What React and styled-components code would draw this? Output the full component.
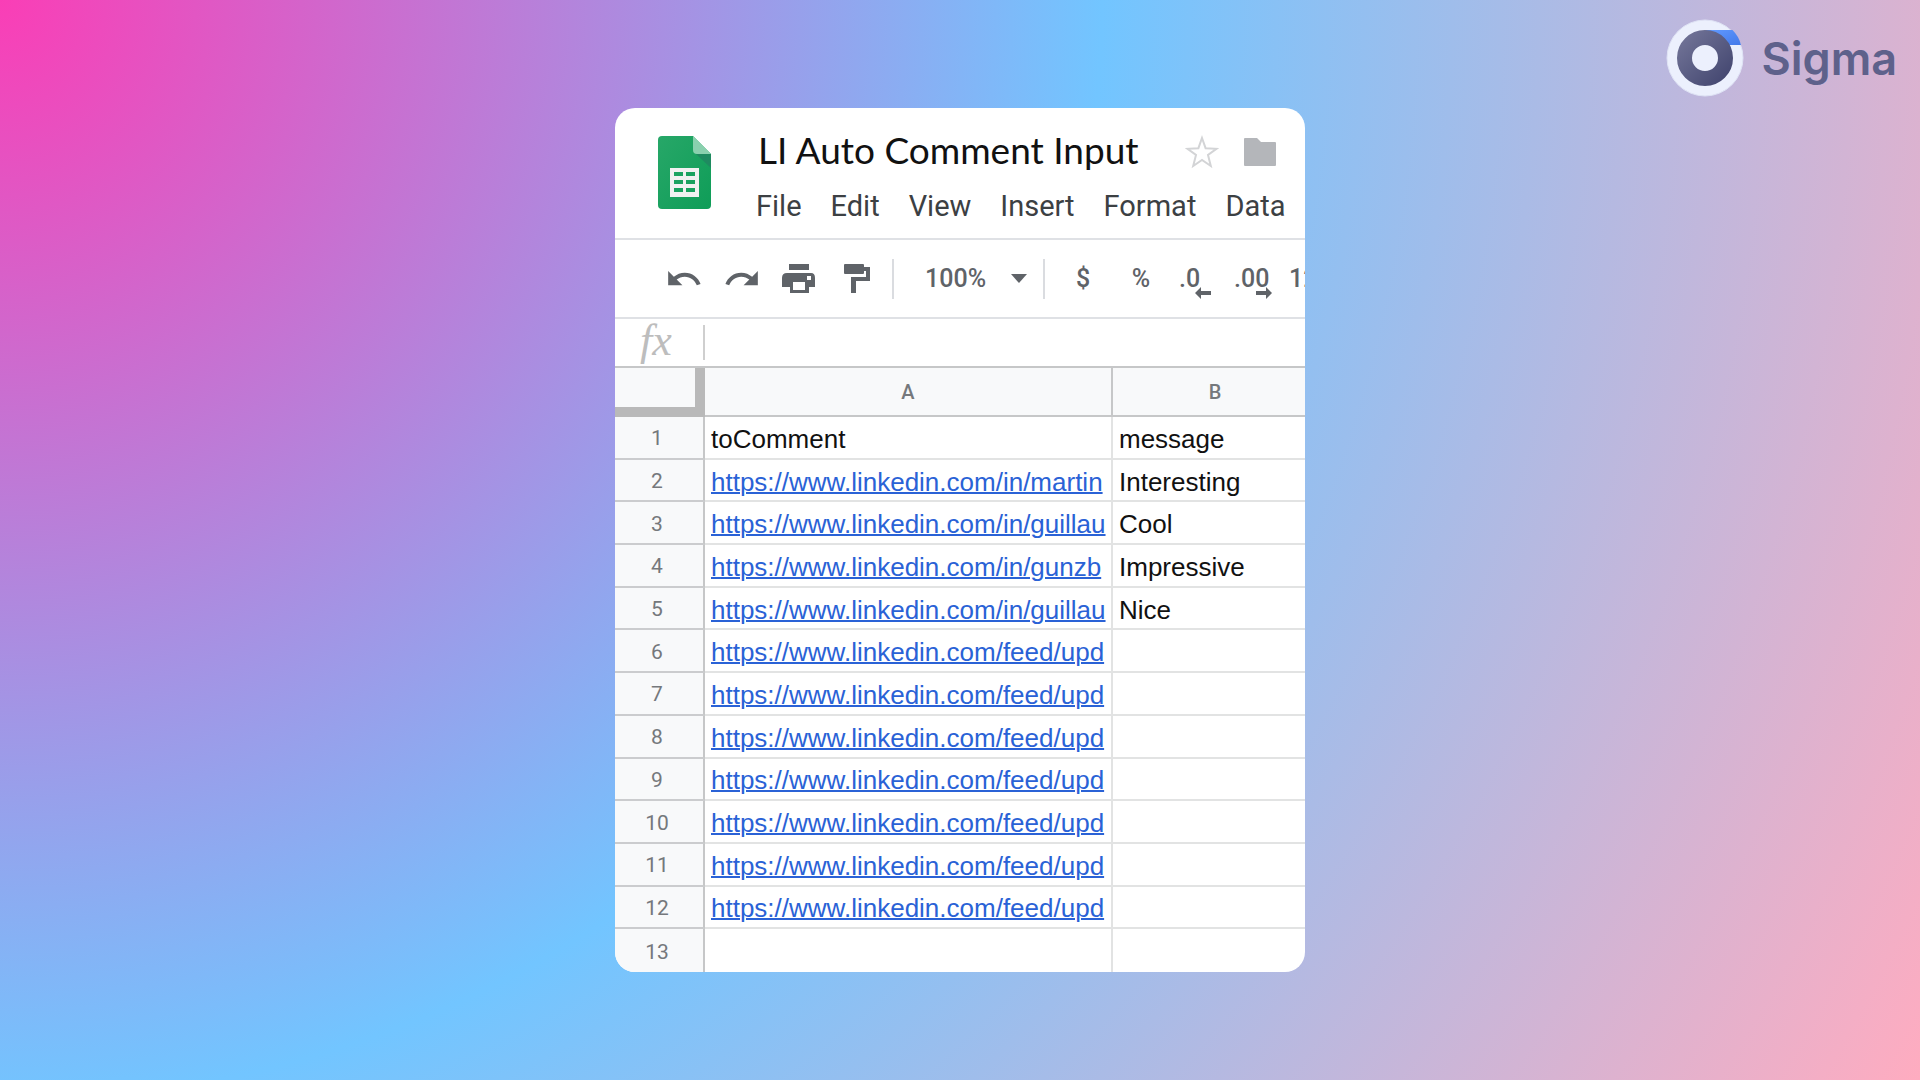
import React from 'react';
import styled, { createGlobalStyle } from 'styled-components';

const GlobalStyle = createGlobalStyle`
  *, *:before, *:after {
    box-sizing: border-box;
  }
  body {
    margin: 0;
  }
  button, input, select {
    font: inherit;
    color: inherit;
    background: none;
    border: 0;
    padding: 0;
    margin: 0;
  }
`;

const Page = styled.div`
  min-height: 100vh;
  display: grid;
  grid-template-columns: 1fr minmax(0, 690px) 1fr;
  align-items: center;
  font-family: Roboto, 'Liberation Sans', sans-serif;
  background: radial-gradient(circle farthest-corner at 0 0, #fa3eb6 0%, #72c5ff 50%, #ffacc0 100%);
`;
const Card = styled.main`
  grid-column: 2;
  min-height: 80vh;
  display: flex;
  flex-direction: column;
  overflow: hidden;
  border-radius: 20px;
  background-color: white;
`;

const Brand = styled.a`
  grid-column: 3;
  align-self: start;
  justify-self: end;
  display: flex;
  align-items: center;
  gap: 16px;
  padding: 18px 23px;
  color: #5e618b;
  font-family: Inter, 'Liberation Sans', sans-serif;
  font-size: 45px;
  font-weight: 600;
  line-height: 1;
  text-decoration: none;

  svg {
    width: 80px;
    height: 80px;
  }
`;

const TopBar = styled.header`
  display: flex;
  align-items: flex-start;
  gap: 44px;
  height: 132px;
  padding: 26px 0 0 43px;
  border-bottom: 2px solid #dfe1e5;
`;
const FileIcon = styled.svg`
  flex: none;
  width: 54px;
  height: 76px;
`;
const TitleRow = styled.div`
  display: flex;
  align-items: center;
  height: 36px;
`;
const Title = styled.h1`
  margin: 0 46px 0 2px;
  padding-bottom: 4px;
  color: #111;
  font-family: Lato, Roboto, sans-serif;
  font-size: 37px;
  font-weight: 400;
  line-height: 36px;
  white-space: nowrap;
`;
const TitleButton = styled.button`
  display: flex;
  margin-right: 24px;

  svg {
    width: 34px;
    height: 34px;
  }
`;
const Menu = styled.nav`
  display: flex;
  gap: 29px;
  margin-top: 18px;
`;
const MenuItem = styled.button`
  color: #3c4043;
  font-size: 29px;
  line-height: 36px;
`;

const Toolbar = styled.div`
  display: flex;
  flex: none;
  align-items: center;
  height: 79px;
  padding-left: 40px;
  border-bottom: 2px solid #dfe1e5;
  color: #5f6368;
  font-size: 25px;
  font-weight: 500;
  line-height: 28px;
  white-space: nowrap;
`;
const ToolButton = styled.button`
  display: flex;
  flex: none;
  justify-content: center;
  width: ${props => props.$width || 58}px;

  svg {
    width: 38px;
    height: 38px;
  }
`;
const Divider = styled.span`
  flex: none;
  width: 2px;
  height: 40px;
  background-color: #dadce0;
`;
const ZoomBox = styled.label`
  display: flex;
  flex: none;
  align-items: center;
  position: relative;
  width: 149px;
  padding-left: 31px;

  select {
    width: 100%;
    appearance: none;
    outline: none;
  }
  svg {
    position: absolute;
    right: 16px;
    width: 16px;
    height: 9px;
    pointer-events: none;
  }
`;
const FormatButton = styled.button`
  flex: none;
  position: relative;
  width: 55px;
  padding-left: 18px;
  text-align: left;

  svg {
    position: absolute;
    left: ${props => props.$arrow}px;
    top: 22px;
    width: 16px;
    height: 12px;
  }
`;
const IconGroup = styled.div`
  display: flex;
  flex: none;
  padding-right: 5px;
`;

const FormulaBar = styled.label`
  display: flex;
  flex: none;
  align-items: center;
  height: 47px;
`;
const Fx = styled.span`
  width: 88px;
  padding: 0 0 4px 25px;
  color: #bdbdbd;
  font-family: 'Liberation Serif', serif;
  font-size: 44px;
  font-style: italic;
  line-height: 40px;
`;
const FormulaInput = styled.input`
  flex: 1;
  height: 35px;
  padding: 0 8px;
  border-left: 2px solid #cfcfcf;
  outline: none;
  font-size: 26px;
`;

/* column B runs a little past the card's right edge */
const Table = styled.table`
  flex: 1;
  width: calc(100% + 14px);
  table-layout: fixed;
  border-collapse: separate;
  border-spacing: 0;
  border-top: 2px solid #c6c7c8;

  tbody tr {
    height: 42px;
  }
  tbody tr:last-child > * {
    border-bottom: 0;
  }
`;
const Corner = styled.td`
  width: 90px;
  height: 49px;
  padding: 0;
  background-color: #f8f9fa;
  border-right: 10px solid #b9b9b9;
  border-bottom: 10px solid #b9b9b9;
`;
const ColumnHead = styled.th`
  width: ${props => props.$width || 'auto'};
  height: 49px;
  padding: 0;
  background-color: #f8f9fa;
  border-right: 2px solid #c6c7c8;
  border-bottom: 2px solid #c6c7c8;
  color: #75787c;
  font-size: 20px;
  font-weight: 500;
`;
const RowHead = styled.th`
  padding: 2px 4px 0 0;
  background-color: #f8f9fa;
  border-right: 2px solid #c6c7c8;
  border-bottom: 2px solid #cbccce;
  color: #75787c;
  font-size: 21px;
  font-weight: 400;
  line-height: 24px;
`;
const Cell = styled.td`
  padding: 3px 0 0 6px;
  border-right: 2px solid #e2e3e3;
  border-bottom: 2px solid #e2e3e3;
  color: #111;
  font-family: 'Liberation Sans', Arial, sans-serif;
  font-size: 26px;
  line-height: 30px;
  white-space: nowrap;
  overflow: hidden;

  a {
    display: block;
    color: #2a62d6;
    text-decoration: underline;
    text-decoration-thickness: 2px;
  }
`;

const ROWS = [
  { text: 'toComment', message: 'message' },
  { link: 'https://www.linkedin.com/in/martin', message: 'Interesting' },
  { link: 'https://www.linkedin.com/in/guillau', message: 'Cool' },
  { link: 'https://www.linkedin.com/in/gunzb', message: 'Impressive' },
  { link: 'https://www.linkedin.com/in/guillau', message: 'Nice' },
  { link: 'https://www.linkedin.com/feed/upd' },
  { link: 'https://www.linkedin.com/feed/upd' },
  { link: 'https://www.linkedin.com/feed/upd' },
  { link: 'https://www.linkedin.com/feed/upd' },
  { link: 'https://www.linkedin.com/feed/upd' },
  { link: 'https://www.linkedin.com/feed/upd' },
  { link: 'https://www.linkedin.com/feed/upd' },
  {},
];

const MENU = ['File', 'Edit', 'View', 'Insert', 'Format', 'Data'];

const SigmaLogo = () => (
  <svg viewBox="0 0 80 80" aria-hidden="true">
    <defs>
      <linearGradient id="sigma-ring" x1="0" y1="0" x2="1" y2="1">
        <stop offset="0" stopColor="#6f7195" />
        <stop offset="1" stopColor="#464972" />
      </linearGradient>
      <linearGradient id="sigma-blue" x1="0" y1="0" x2="1" y2="1">
        <stop offset="0" stopColor="#629bff" />
        <stop offset="1" stopColor="#4379ea" />
      </linearGradient>
    </defs>
    <circle cx="40" cy="40" r="38" fill="#ecf0fd" stroke="#dfe3f5" strokeWidth="1" />
    <path d="M40 12H67.5Q74 18.5 76 27H60Z" fill="url(#sigma-blue)" />
    <circle cx="40" cy="40" r="20.5" fill="none" stroke="url(#sigma-ring)" strokeWidth="15" />
  </svg>
);

const SheetsIcon = () => (
  <FileIcon viewBox="0 0 54 76" aria-hidden="true">
    <defs>
      <linearGradient id="sheet-body" x1="0" y1="0" x2="1" y2="1">
        <stop offset="0" stopColor="#27a768" />
        <stop offset="1" stopColor="#0f9d58" />
      </linearGradient>
    </defs>
    <path d="M4 2H35L53 20V71Q53 75 49 75H4Q0 75 0 71V6Q0 2 4 2Z" fill="url(#sheet-body)" />
    <path d="M38 20L53 34V20Z" fill="#1f8a60" />
    <path d="M35 2L53 20H39Q35 20 35 16Z" fill="#8ad0ae" />
    <path
      d="M12 34H41V63H12ZM16 38V42H25V38ZM28 38V42H37V38ZM16 46V50H25V46ZM28 46V50H37V46ZM16 54V58H25V54ZM28 54V58H37V54Z"
      fill="#f1f1f1"
      fillRule="evenodd"
    />
  </FileIcon>
);

const Arrow = ({ left }) => (
  <svg viewBox="0 0 16 12" fill="currentColor" aria-hidden="true">
    {left ? <path d="M6 0V4H16V8H6V12L0 6Z" /> : <path d="M10 0V4H0V8H10V12L16 6Z" />}
  </svg>
);

const App = () => (
  <>
    <GlobalStyle />
    <Page>
      <Card>
        <TopBar>
          <SheetsIcon />
          <div>
            <TitleRow>
              <Title>LI Auto Comment Input</Title>
              <TitleButton aria-label="Star">
                <svg viewBox="0 0 34 34" fill="none" stroke="#d3d4d6" strokeWidth="2">
                  <path d="M17 3L20.6 13.2L31.5 13.8L23 20L25.8 31L17 25L8.2 31L11 20L2.5 13.8L13.4 13.2Z" />
                </svg>
              </TitleButton>
              <TitleButton aria-label="Move to folder">
                <svg viewBox="0 0 34 34" fill="#b4b6ba">
                  <path d="M2 3H14L18 7H32Q33 7 33 8V30Q33 31 32 31H2Q1 31 1 30V4Q1 3 2 3Z" />
                </svg>
              </TitleButton>
            </TitleRow>
            <Menu>
              {MENU.map(item => <MenuItem key={item}>{item}</MenuItem>)}
            </Menu>
          </div>
        </TopBar>

        <Toolbar>
          <IconGroup>
            <ToolButton aria-label="Undo">
              <svg viewBox="0 0 24 24" fill="currentColor">
                <path d="M12.5 8c-2.65 0-5.05.99-6.9 2.6L2 7v9h9l-3.62-3.62c1.39-1.16 3.16-1.88 5.12-1.88 3.54 0 6.55 2.31 7.6 5.5l2.37-.78C21.08 11.03 17.15 8 12.5 8z" />
              </svg>
            </ToolButton>
            <ToolButton aria-label="Redo">
              <svg viewBox="0 0 24 24" fill="currentColor">
                <path d="M18.4 10.6C16.55 8.99 14.15 8 11.5 8c-4.65 0-8.58 3.03-9.96 7.22L3.9 16c1.05-3.19 4.05-5.5 7.6-5.5 1.95 0 3.73.72 5.12 1.88L13 16h9V7l-3.6 3.6z" />
              </svg>
            </ToolButton>
            <ToolButton aria-label="Print">
              <svg viewBox="0 0 38 38" fill="currentColor" fillRule="evenodd">
                <path d="M8 4H28V10H8ZM6 13H30Q34 13 34 18V27H28V33H9V27H1V18Q1 13 6 13ZM12 22V30H24V22ZM26 16V20H30V16Z" />
              </svg>
            </ToolButton>
            <ToolButton aria-label="Paint format">
              <svg viewBox="0 0 38 38" fill="currentColor">
                <path d="M6 4H24Q25 4 25 5V7H31V21H17V33H12V17H27V11H25V13Q25 14 24 14H6Q5 14 5 13V5Q5 4 6 4Z" />
              </svg>
            </ToolButton>
          </IconGroup>
          <Divider />
          <ZoomBox>
            <select aria-label="Zoom" defaultValue="100%">
              <option>100%</option>
            </select>
            <svg viewBox="0 0 16 9" fill="currentColor" aria-hidden="true">
              <path d="M0 0H16L8 9Z" />
            </svg>
          </ZoomBox>
          <Divider />
          <ToolButton $width={76} aria-label="Format as currency">$</ToolButton>
          <ToolButton $width={40} aria-label="Format as percent">%</ToolButton>
          <FormatButton $arrow={34} aria-label="Decrease decimal places">
            .0
            <Arrow left />
          </FormatButton>
          <FormatButton $arrow={40} aria-label="Increase decimal places">
            .00
            <Arrow />
          </FormatButton>
          <FormatButton aria-label="More formats">123</FormatButton>
        </Toolbar>

        <FormulaBar>
          <Fx>fx</Fx>
          <FormulaInput type="text" aria-label="Formula" />
        </FormulaBar>

        <Table>
          <thead>
            <tr>
              <Corner />
              <ColumnHead $width="408px">A</ColumnHead>
              <ColumnHead>B</ColumnHead>
            </tr>
          </thead>
          <tbody>
            {ROWS.map((row, i) => (
              <tr key={i}>
                <RowHead scope="row">{i + 1}</RowHead>
                <Cell>{row.link ? <a href={row.link}>{row.link}</a> : row.text}</Cell>
                <Cell>{row.message}</Cell>
              </tr>
            ))}
          </tbody>
        </Table>
      </Card>

      <Brand href="#">
        <SigmaLogo />
        Sigma
      </Brand>
    </Page>
  </>
);

export default App;
